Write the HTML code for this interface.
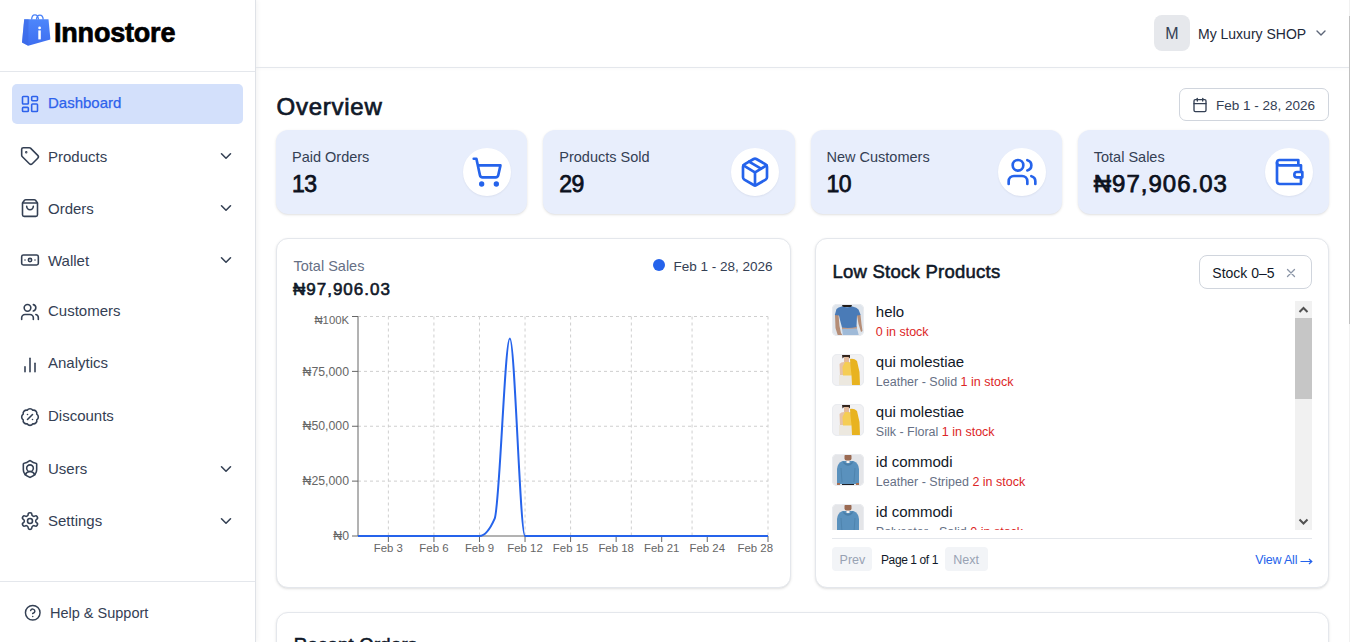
<!DOCTYPE html>
<html><head><meta charset="utf-8"><title>Innostore Dashboard</title>
<style>
*{box-sizing:border-box;margin:0;padding:0}
html,body{width:1350px;height:642px;overflow:hidden;background:#fff;font-family:"Liberation Sans",sans-serif;color:#344054}
.a{position:absolute;white-space:nowrap;line-height:1}
svg.i{position:absolute;fill:none;stroke:currentColor;stroke-width:2;stroke-linecap:round;stroke-linejoin:round;overflow:visible}
.nav{font-size:15px;color:#344054}
.sb{font-weight:400;-webkit-text-stroke:0.55px currentColor}
.card{position:absolute;border:1px solid #e4e7ec;border-radius:12px;background:#fff;box-shadow:0 1px 3px rgba(0,0,0,.1),0 1px 2px -1px rgba(0,0,0,.1)}
.stat{position:absolute;top:130px;width:251.25px;height:84px;border-radius:12px;background:#e8eefc;box-shadow:0 1px 3px rgba(0,0,0,.1),0 1px 2px -1px rgba(0,0,0,.1)}
.stat .lbl{position:absolute;left:16px;top:19.7px;font-size:14.5px;color:#344054;line-height:1;white-space:nowrap}
.stat .val{position:absolute;left:16px;top:43px;font-size:23px;font-weight:400;-webkit-text-stroke:.75px #0c111d;color:#0c111d;line-height:1;white-space:nowrap}
.circ{position:absolute;left:187.25px;top:18px;width:48px;height:48px;border-radius:50%;background:#fff;color:#2563eb;box-shadow:0 1px 2px rgba(16,24,40,.06)}
.circ svg{left:8px;top:8px}
</style></head><body>

<!-- ============ SIDEBAR ============ -->
<div style="position:absolute;left:0;top:0;width:256px;height:642px;border-right:1px solid #dfe2e7;box-shadow:1px 0 5px rgba(0,0,0,.06);background:#fff"></div>
<div style="position:absolute;left:0;top:71px;width:255px;height:1px;background:#e4e7ec"></div>
<div style="position:absolute;left:0;top:581px;width:255px;height:1px;background:#e4e7ec"></div>

<!-- logo -->
<svg style="position:absolute;left:20px;top:12px" width="34" height="36" viewBox="20 12 34 36">
  <defs><linearGradient id="bg1" x1="0" y1="0" x2="0" y2="1"><stop offset="0" stop-color="#4d86fb"/><stop offset="1" stop-color="#3d6ef0"/></linearGradient></defs>
  <path d="M31.6 19.6 C32 13.6 37.6 13.2 38.6 19.6 M36.4 19.6 C37 13.6 42.8 13.6 43.2 19.6" fill="none" stroke="#4b82f8" stroke-width="1.3"/>
  <path d="M24.2 19.3 L48.5 19.3 L50.4 39.4 L28.2 45.8 L22 42.4 Z" fill="url(#bg1)"/>
  <path d="M24.2 19.3 L28.6 19.3 L28.2 45.8 L22 42.4 Z" fill="#3a66e4" opacity=".55"/>
  <rect x="38.3" y="30.4" width="2.5" height="9" fill="#fff"/>
  <circle cx="39.6" cy="27.9" r="1.4" fill="#fff"/>
</svg>
<div class="a" style="left:54px;top:19.6px;font-size:27px;font-weight:700;color:#000;letter-spacing:-.2px;-webkit-text-stroke:.7px #000">Innostore</div>

<!-- Dashboard active -->
<div style="position:absolute;left:12px;top:84px;width:231px;height:40px;border-radius:5px;background:#d3e0fb"></div>
<svg class="i" style="left:19.5px;top:94px;color:#2d62ec;stroke-width:1.9" width="20" height="20" viewBox="0 0 24 24"><rect width="7" height="9" x="3" y="3" rx="1"/><rect width="7" height="5" x="14" y="3" rx="1"/><rect width="7" height="9" x="14" y="12" rx="1"/><rect width="7" height="5" x="3" y="16" rx="1"/></svg>
<div class="a nav" style="left:48px;top:94.8px;color:#2d62ec;-webkit-text-stroke:.25px #2d62ec">Dashboard</div>

<!-- Products -->
<svg class="i" style="left:20px;top:146px;stroke-width:1.9" width="20" height="20" viewBox="0 0 24 24"><path d="M12.586 2.586A2 2 0 0 0 11.172 2H4a2 2 0 0 0-2 2v7.172a2 2 0 0 0 .586 1.414l8.704 8.704a2.426 2.426 0 0 0 3.42 0l6.58-6.58a2.426 2.426 0 0 0 0-3.42z"/><circle cx="7.5" cy="7.5" r=".5" fill="currentColor"/></svg>
<div class="a nav" style="left:48px;top:149px">Products</div>
<svg class="i" style="left:216.8px;top:147.2px;stroke-width:2.1" width="18" height="18" viewBox="0 0 24 24"><path d="m6 9 6 6 6-6"/></svg>

<!-- Orders -->
<svg class="i" style="left:20px;top:197.6px;stroke-width:1.9" width="20" height="20" viewBox="0 0 24 24"><path d="M16 10a4 4 0 0 1-8 0"/><path d="M3.103 6.034h17.794"/><path d="M3.4 5.467a2 2 0 0 0-.4 1.2V20a2 2 0 0 0 2 2h14a2 2 0 0 0 2-2V6.667a2 2 0 0 0-.4-1.2l-2-2.667A2 2 0 0 0 17 2H7a2 2 0 0 0-1.6.8z"/></svg>
<div class="a nav" style="left:48px;top:201.3px">Orders</div>
<svg class="i" style="left:216.8px;top:199px;stroke-width:2.1" width="18" height="18" viewBox="0 0 24 24"><path d="m6 9 6 6 6-6"/></svg>

<!-- Wallet -->
<svg class="i" style="left:20px;top:250px;stroke-width:1.9" width="20" height="20" viewBox="0 0 24 24"><rect width="20" height="12" x="2" y="6" rx="2"/><circle cx="12" cy="12" r="2"/><path d="M6 12h.01M18 12h.01"/></svg>
<div class="a nav" style="left:48px;top:253.3px">Wallet</div>
<svg class="i" style="left:216.8px;top:251px;stroke-width:2.1" width="18" height="18" viewBox="0 0 24 24"><path d="m6 9 6 6 6-6"/></svg>

<!-- Customers -->
<svg class="i" style="left:20px;top:301.8px;stroke-width:1.9" width="20" height="20" viewBox="0 0 24 24"><path d="M16 21v-2a4 4 0 0 0-4-4H6a4 4 0 0 0-4 4v2"/><circle cx="9" cy="7" r="4"/><path d="M22 21v-2a4 4 0 0 0-3-3.87"/><path d="M16 3.13a4 4 0 0 1 0 7.75"/></svg>
<div class="a nav" style="left:48px;top:303.3px">Customers</div>

<!-- Analytics -->
<svg class="i" style="left:20px;top:355px;stroke-width:1.9" width="20" height="20" viewBox="0 0 24 24"><path d="M18 20V10"/><path d="M12 20V4"/><path d="M6 20v-6"/></svg>
<div class="a nav" style="left:48px;top:355.3px">Analytics</div>

<!-- Discounts -->
<svg class="i" style="left:20px;top:406.8px;stroke-width:1.9" width="20" height="20" viewBox="0 0 24 24"><path d="M3.85 8.62a4 4 0 0 1 4.78-4.77 4 4 0 0 1 6.74 0 4 4 0 0 1 4.78 4.78 4 4 0 0 1 0 6.74 4 4 0 0 1-4.77 4.78 4 4 0 0 1-6.75 0 4 4 0 0 1-4.78-4.77 4 4 0 0 1 0-6.76Z"/><path d="m15 9-6 6"/><path d="M9 9h.01"/><path d="M15 15h.01"/></svg>
<div class="a nav" style="left:48px;top:408.3px">Discounts</div>

<!-- Users -->
<svg class="i" style="left:20px;top:459px;stroke-width:1.9" width="20" height="20" viewBox="0 0 24 24"><path d="M20 13c0 5-3.5 7.5-7.66 8.95a1 1 0 0 1-.67-.01C7.5 20.5 4 18 4 13V6a1 1 0 0 1 1-1c2 0 4.5-1.2 6.24-2.72a1.17 1.17 0 0 1 1.52 0C14.51 3.81 17 5 19 5a1 1 0 0 1 1 1z"/><path d="M6.376 18.91a6 6 0 0 1 11.249.003"/><circle cx="12" cy="11" r="4"/></svg>
<div class="a nav" style="left:48px;top:461.3px">Users</div>
<svg class="i" style="left:216.8px;top:459.5px;stroke-width:2.1" width="18" height="18" viewBox="0 0 24 24"><path d="m6 9 6 6 6-6"/></svg>

<!-- Settings -->
<svg class="i" style="left:19.6px;top:511px;stroke-width:1.9" width="20" height="20" viewBox="0 0 24 24"><path d="M12.22 2h-.44a2 2 0 0 0-2 2v.18a2 2 0 0 1-1 1.73l-.43.25a2 2 0 0 1-2 0l-.15-.08a2 2 0 0 0-2.73.73l-.22.38a2 2 0 0 0 .73 2.73l.15.1a2 2 0 0 1 1 1.72v.51a2 2 0 0 1-1 1.74l-.15.09a2 2 0 0 0-.73 2.730l.22.38a2 2 0 0 0 2.73.73l.15-.08a2 2 0 0 1 2 0l.43.25a2 2 0 0 1 1 1.73V20a2 2 0 0 0 2 2h.44a2 2 0 0 0 2-2v-.18a2 2 0 0 1 1-1.73l.43-.25a2 2 0 0 1 2 0l.15.08a2 2 0 0 0 2.73-.73l.22-.39a2 2 0 0 0-.73-2.73l-.15-.08a2 2 0 0 1-1-1.74v-.5a2 2 0 0 1 1-1.74l.15-.09a2 2 0 0 0 .73-2.73l-.22-.38a2 2 0 0 0-2.73-.73l-.15.08a2 2 0 0 1-2 0l-.43-.25a2 2 0 0 1-1-1.73V4a2 2 0 0 0-2-2z"/><circle cx="12" cy="12" r="3"/></svg>
<div class="a nav" style="left:48px;top:513.3px">Settings</div>
<svg class="i" style="left:216.8px;top:512px;stroke-width:2.1" width="18" height="18" viewBox="0 0 24 24"><path d="m6 9 6 6 6-6"/></svg>

<!-- Help -->
<svg class="i" style="left:24.25px;top:603.9px;stroke-width:2" width="17.5" height="17.5" viewBox="0 0 24 24"><circle cx="12" cy="12" r="10"/><path d="M9.09 9a3 3 0 0 1 5.83 1c0 2-3 3-3 3"/><path d="M12 17h.01"/></svg>
<div class="a" style="left:50px;top:605.7px;font-size:14.5px;color:#344054">Help &amp; Support</div>

<!-- ============ HEADER ============ -->
<div style="position:absolute;left:256px;top:67px;width:1094px;height:1px;background:#e4e7ec;box-shadow:0 1px 3px rgba(16,24,40,.05)"></div>
<div style="position:absolute;left:1154px;top:15px;width:36px;height:36px;border-radius:8px;background:#e6e8ec"></div>
<div class="a" style="left:1154px;top:25.5px;width:36px;text-align:center;font-size:16px;color:#344054">M</div>
<div class="a" style="left:1198px;top:26.6px;font-size:14px;color:#1d2939">My Luxury SHOP</div>
<svg class="i" style="left:1313px;top:24.9px;stroke-width:2.1;color:#5d6678" width="16" height="16" viewBox="0 0 24 24"><path d="m6 9 6 6 6-6"/></svg>
<!-- page scrollbar -->
<div style="position:absolute;left:1349px;top:0;width:1px;height:642px;background:#f1f1f1"></div>
<div style="position:absolute;left:1349px;top:16px;width:1px;height:308px;background:#c1c1c1"></div>

<!-- ============ OVERVIEW ============ -->
<div class="a sb" style="left:276.5px;top:94.7px;font-size:24px;letter-spacing:.75px;-webkit-text-stroke-width:.7px;color:#101828">Overview</div>
<div style="position:absolute;left:1179px;top:88px;width:150px;height:33px;border:1px solid #d0d5dd;border-radius:7px;background:#fff"></div>
<svg class="i" style="left:1192px;top:97px;stroke-width:2;color:#344054" width="16" height="16" viewBox="0 0 24 24"><path d="M8 2v4"/><path d="M16 2v4"/><rect width="18" height="18" x="3" y="4" rx="2"/><path d="M3 10h18"/></svg>
<div class="a" style="left:1216px;top:99px;font-size:13.5px;color:#344054">Feb 1 - 28, 2026</div>

<div class="stat" style="left:276px">
  <div class="lbl">Paid Orders</div>
  <div class="val" style="letter-spacing:-0.5px">13</div>
  <div class="circ"><svg class="i" width="32" height="32" viewBox="0 0 24 24"><circle cx="8" cy="21" r="1"/><circle cx="19" cy="21" r="1"/><path d="M2.05 2.05h2l2.66 12.42a2 2 0 0 0 2 1.58h9.78a2 2 0 0 0 1.95-1.57l1.65-7.43H5.12"/></svg></div>
</div>
<div class="stat" style="left:543.25px">
  <div class="lbl">Products Sold</div>
  <div class="val" style="letter-spacing:-0.5px">29</div>
  <div class="circ"><svg class="i" width="32" height="32" viewBox="0 0 24 24"><path d="M11 21.73a2 2 0 0 0 2 0l7-4A2 2 0 0 0 21 16V8a2 2 0 0 0-1-1.73l-7-4a2 2 0 0 0-2 0l-7 4A2 2 0 0 0 3 8v8a2 2 0 0 0 1 1.73z"/><path d="M12 22V12"/><path d="m3.3 7 7.703 4.734a2 2 0 0 0 1.994 0L20.7 7"/><path d="m7.5 4.27 9 5.15"/></svg></div>
</div>
<div class="stat" style="left:810.5px">
  <div class="lbl">New Customers</div>
  <div class="val" style="letter-spacing:-0.5px">10</div>
  <div class="circ"><svg class="i" width="32" height="32" viewBox="0 0 24 24"><path d="M16 21v-2a4 4 0 0 0-4-4H6a4 4 0 0 0-4 4v2"/><circle cx="9" cy="7" r="4"/><path d="M22 21v-2a4 4 0 0 0-3-3.87"/><path d="M16 3.13a4 4 0 0 1 0 7.75"/></svg></div>
</div>
<div class="stat" style="left:1077.75px">
  <div class="lbl">Total Sales</div>
  <div class="val" style="font-size:24px;letter-spacing:1px;top:42px">₦97,906.03</div>
  <div class="circ"><svg class="i" width="32" height="32" viewBox="0 0 24 24"><path d="M21 12V7H5a2 2 0 0 1 0-4h14v4"/><path d="M3 5v14a2 2 0 0 0 2 2h16v-5"/><path d="M18 12a2 2 0 0 0 0 4h4v-4Z"/></svg></div>
</div>

<!-- CHART_CARD -->
<div class="card" style="left:276px;top:238px;width:515px;height:350px"></div>
<div class="a" style="left:293.5px;top:258.5px;font-size:14.5px;color:#667085">Total Sales</div>
<div class="a sb" style="left:293px;top:281.2px;font-size:17px;color:#101828;letter-spacing:1px;-webkit-text-stroke-width:.6px">₦97,906.03</div>
<div style="position:absolute;left:653px;top:259px;width:12px;height:12px;border-radius:50%;background:#2563eb"></div>
<div class="a" style="left:673.5px;top:259.8px;font-size:13.5px;color:#344054">Feb 1 - 28, 2026</div>
<svg style="position:absolute;left:0;top:0" width="1350" height="642" viewBox="0 0 1350 642">
<g stroke="#cfcfcf" stroke-width="1" stroke-dasharray="3 3" fill="none"><line x1="358" y1="316.50" x2="768" y2="316.50"/><line x1="358" y1="371.38" x2="768" y2="371.38"/><line x1="358" y1="426.25" x2="768" y2="426.25"/><line x1="358" y1="481.12" x2="768" y2="481.12"/><line x1="388.37" y1="316.5" x2="388.37" y2="536"/><line x1="433.93" y1="316.5" x2="433.93" y2="536"/><line x1="479.48" y1="316.5" x2="479.48" y2="536"/><line x1="525.04" y1="316.5" x2="525.04" y2="536"/><line x1="570.59" y1="316.5" x2="570.59" y2="536"/><line x1="631.33" y1="316.5" x2="631.33" y2="536"/><line x1="692.07" y1="316.5" x2="692.07" y2="536"/><line x1="768.00" y1="316.5" x2="768.00" y2="536"/></g>
<g stroke="#666" stroke-width="1" fill="none"><line x1="358" y1="316.5" x2="358" y2="536"/><line x1="358" y1="536" x2="768" y2="536"/><line x1="352" y1="316.50" x2="358" y2="316.50"/><line x1="352" y1="371.38" x2="358" y2="371.38"/><line x1="352" y1="426.25" x2="358" y2="426.25"/><line x1="352" y1="481.12" x2="358" y2="481.12"/><line x1="352" y1="536.00" x2="358" y2="536.00"/><line x1="388.37" y1="536" x2="388.37" y2="542"/><line x1="433.93" y1="536" x2="433.93" y2="542"/><line x1="479.48" y1="536" x2="479.48" y2="542"/><line x1="525.04" y1="536" x2="525.04" y2="542"/><line x1="570.59" y1="536" x2="570.59" y2="542"/><line x1="616.15" y1="536" x2="616.15" y2="542"/><line x1="661.70" y1="536" x2="661.70" y2="542"/><line x1="707.26" y1="536" x2="707.26" y2="542"/><line x1="768.00" y1="536" x2="768.00" y2="542"/></g>
<g font-family="Liberation Sans" font-size="12.3" fill="#666" text-anchor="end"><text x="349" y="324.0" font-size="11.3">₦100K</text><text x="349" y="375.6">₦75,000</text><text x="349" y="430.4">₦50,000</text><text x="349" y="485.3">₦25,000</text><text x="349" y="540.2">₦0</text></g>
<g font-family="Liberation Sans" font-size="11.4" fill="#666" text-anchor="middle"><text x="388.37" y="551.6">Feb 3</text><text x="433.93" y="551.6">Feb 6</text><text x="479.48" y="551.6">Feb 9</text><text x="525.04" y="551.6">Feb 12</text><text x="570.59" y="551.6">Feb 15</text><text x="616.15" y="551.6">Feb 18</text><text x="661.70" y="551.6">Feb 21</text><text x="707.26" y="551.6">Feb 24</text><text x="773" y="551.6" text-anchor="end">Feb 28</text></g>
<path d="M358,536H464.30C469.36,536.00,474.42,536.00,479.48,536.00C484.54,536.00,489.60,530.22,494.67,518.65C499.73,507.08,504.79,338.45,509.85,338.45C514.91,338.45,519.98,536.00,525.04,536.00C530.10,536.00,535.16,536.00,540.22,536.00H768" fill="none" stroke="#2563eb" stroke-width="2"/>
</svg>


<!-- LOWSTOCK_CARD -->
<div class="card" style="left:815px;top:238px;width:514px;height:350px"></div>
<div class="a sb" style="left:832.4px;top:263.3px;font-size:18.5px;letter-spacing:.25px;color:#101828">Low Stock Products</div>
<div style="position:absolute;left:1199px;top:255px;width:113px;height:34px;border:1px solid #d0d5dd;border-radius:8px;background:#fff"></div>
<div class="a" style="left:1212.3px;top:266.1px;font-size:14px;color:#101828">Stock 0–5</div>
<svg class="i" style="left:1286px;top:267.5px;stroke-width:1.3;color:#8a94a6" width="10" height="10" viewBox="0 0 10 10"><path d="M1.5 1.5 8.5 8.5M8.5 1.5 1.5 8.5"/></svg>
<div style="position:absolute;left:832px;top:301px;width:480px;height:229px;overflow:hidden">
<svg style="position:absolute;left:0;top:3px;border-radius:5px;outline:1px solid #eaecf0;outline-offset:-1px" width="32" height="32" viewBox="0 0 32 32"><rect width="32" height="32" fill="#dfe5ec"/><path d="M3 11 L6.5 10.5 L7.5 22 L9 29 L11 32 L6 32 L3.5 24 Z" fill="#b58d76"/><path d="M25 11 L28.5 11 L29.5 20 L30.5 27 L29 28 L26.5 20 Z" fill="#b58d76"/><rect x="10" y="22.5" width="15" height="3" fill="#c59a82"/><path d="M10 25 L25 24.5 L27 32 L11 32 Z" fill="#9fbad8"/><path d="M10 0.5 L20 0.5 L19.5 3 L10.5 3 Z" fill="#221c18"/><path d="M2.8 11 L4.5 5 Q6 3 10 2.5 Q15 4 20.5 2.5 Q25 3.5 26.5 5.5 L28.7 11 L25 11.5 L24.5 23 Q17 24.5 10 23.5 L8 16 L7 11.5 Z" fill="#4a7bb7"/></svg>
<div class="a" style="left:43.8px;top:3.0px;font-size:15px;color:#101828">helo</div>
<div class="a" style="left:43.8px;top:24.8px;font-size:12.5px;color:#667085"><span style="color:#dc2626">0 in stock</span></div>
<svg style="position:absolute;left:0;top:53px;border-radius:5px;outline:1px solid #eaecf0;outline-offset:-1px" width="32" height="32" viewBox="0 0 32 32"><rect width="32" height="32" fill="#f1f1f3"/><path d="M7.5 10 Q9 8 12 8 L19 8 L20 22 L8 22 Z" fill="#e6c2a6"/><rect x="7" y="21" width="13" height="11" fill="#ece8df"/><path d="M13 8 L17 8 L20 13 L20 21.5 L11 21.5 L10.5 13 Z" fill="#f5cd55"/><rect x="12" y="2" width="5" height="6" fill="#e3bb9c"/><path d="M10 1 Q14 -0.5 18 1 L18 4.5 L16.5 3 L12 3 L10.5 4.5 Z" fill="#33241c"/><path d="M18 5 Q22 4 25 7 L27.5 18 L28 31 L20 31 L19.5 21 L18.5 12 Z" fill="#e8b320"/></svg>
<div class="a" style="left:43.8px;top:53.0px;font-size:15px;color:#101828">qui molestiae</div>
<div class="a" style="left:43.8px;top:74.8px;font-size:12.5px;color:#667085">Leather - Solid <span style="color:#dc2626">1 in stock</span></div>
<svg style="position:absolute;left:0;top:103px;border-radius:5px;outline:1px solid #eaecf0;outline-offset:-1px" width="32" height="32" viewBox="0 0 32 32"><rect width="32" height="32" fill="#f1f1f3"/><path d="M7.5 10 Q9 8 12 8 L19 8 L20 22 L8 22 Z" fill="#e6c2a6"/><rect x="7" y="21" width="13" height="11" fill="#ece8df"/><path d="M13 8 L17 8 L20 13 L20 21.5 L11 21.5 L10.5 13 Z" fill="#f5cd55"/><rect x="12" y="2" width="5" height="6" fill="#e3bb9c"/><path d="M10 1 Q14 -0.5 18 1 L18 4.5 L16.5 3 L12 3 L10.5 4.5 Z" fill="#33241c"/><path d="M18 5 Q22 4 25 7 L27.5 18 L28 31 L20 31 L19.5 21 L18.5 12 Z" fill="#e8b320"/></svg>
<div class="a" style="left:43.8px;top:103.0px;font-size:15px;color:#101828">qui molestiae</div>
<div class="a" style="left:43.8px;top:124.8px;font-size:12.5px;color:#667085">Silk - Floral <span style="color:#dc2626">1 in stock</span></div>
<svg style="position:absolute;left:0;top:153px;border-radius:5px;outline:1px solid #eaecf0;outline-offset:-1px" width="32" height="32" viewBox="0 0 32 32"><rect width="32" height="32" fill="#e4e5e8"/><rect x="12.5" y="0" width="7" height="6.5" rx="2" fill="#9a6a52"/><rect x="10" y="30" width="12" height="2" fill="#1f1f24"/><path d="M5 30 L5 15 Q5.5 9 10.5 7 L21.5 7 Q26.5 9 27 15 L27 30 Z" fill="#5a91bd"/><path d="M11 7 Q16 13 21 7 L20.5 9.5 Q16 14 11.5 9.5 Z" fill="#4a7ea8"/><rect x="14.5" y="7" width="3" height="2" fill="#f3f3f3"/><path d="M9 14 L10 28" stroke="#4f84ae" stroke-width="1"/><path d="M23 14 L22 28" stroke="#4f84ae" stroke-width="1"/><rect x="5" y="29" width="3" height="2" fill="#a46f55"/><rect x="24" y="29" width="3" height="2" fill="#a46f55"/></svg>
<div class="a" style="left:43.8px;top:153.0px;font-size:15px;color:#101828">id commodi</div>
<div class="a" style="left:43.8px;top:174.8px;font-size:12.5px;color:#667085">Leather - Striped <span style="color:#dc2626">2 in stock</span></div>
<svg style="position:absolute;left:0;top:203px;border-radius:5px;outline:1px solid #eaecf0;outline-offset:-1px" width="32" height="32" viewBox="0 0 32 32"><rect width="32" height="32" fill="#e4e5e8"/><rect x="12.5" y="0" width="7" height="6.5" rx="2" fill="#9a6a52"/><rect x="10" y="30" width="12" height="2" fill="#1f1f24"/><path d="M5 30 L5 15 Q5.5 9 10.5 7 L21.5 7 Q26.5 9 27 15 L27 30 Z" fill="#5a91bd"/><path d="M11 7 Q16 13 21 7 L20.5 9.5 Q16 14 11.5 9.5 Z" fill="#4a7ea8"/><rect x="14.5" y="7" width="3" height="2" fill="#f3f3f3"/><path d="M9 14 L10 28" stroke="#4f84ae" stroke-width="1"/><path d="M23 14 L22 28" stroke="#4f84ae" stroke-width="1"/><rect x="5" y="29" width="3" height="2" fill="#a46f55"/><rect x="24" y="29" width="3" height="2" fill="#a46f55"/></svg>
<div class="a" style="left:43.8px;top:203.0px;font-size:15px;color:#101828">id commodi</div>
<div class="a" style="left:43.8px;top:224.8px;font-size:12.5px;color:#667085">Polyester - Solid <span style="color:#dc2626">0 in stock</span></div>

</div>
<div style="position:absolute;left:1295px;top:301px;width:17px;height:229px;background:#f1f1f1"></div>
<div style="position:absolute;left:1295px;top:318px;width:17px;height:81px;background:#c6c6c6"></div>
<svg style="position:absolute;left:1295px;top:301px" width="17" height="17" viewBox="0 0 17 17"><path d="M4.5 11 8.5 7 12.5 11" fill="none" stroke="#505050" stroke-width="2"/></svg>
<svg style="position:absolute;left:1295px;top:513px" width="17" height="17" viewBox="0 0 17 17"><path d="M4.5 6.5 8.5 10.5 12.5 6.5" fill="none" stroke="#505050" stroke-width="2"/></svg>
<div style="position:absolute;left:832px;top:538px;width:480px;height:1px;background:#e4e7ec"></div>
<div style="position:absolute;left:832px;top:547px;width:40px;height:24px;border-radius:4px;background:#f2f4f7"></div>
<div class="a" style="left:839.6px;top:553.8px;font-size:12.5px;color:#98a2b3">Prev</div>
<div class="a" style="left:881px;top:553.8px;font-size:12px;letter-spacing:-.4px;color:#101828">Page 1 of 1</div>
<div style="position:absolute;left:945px;top:547px;width:43px;height:24px;border-radius:4px;background:#f2f4f7"></div>
<div class="a" style="left:953.3px;top:553.8px;font-size:12.5px;color:#98a2b3">Next</div>
<div class="a" style="left:1255.3px;top:554.2px;font-size:12.5px;letter-spacing:-.2px;color:#2563eb">View All</div>
<svg style="position:absolute;left:1300px;top:556px" width="13" height="10" viewBox="0 0 13 10"><path d="M0.5 5.5H11.5M9 3 11.8 5.5 9 8" fill="none" stroke="#2563eb" stroke-width="1.2"/></svg>


<!-- RECENT -->
<div class="card" style="left:276px;top:612px;width:1053px;height:120px"></div>
<div class="a sb" style="left:293.8px;top:635.7px;font-size:18.5px;letter-spacing:.25px;color:#101828">Recent Orders</div>


</body></html>
